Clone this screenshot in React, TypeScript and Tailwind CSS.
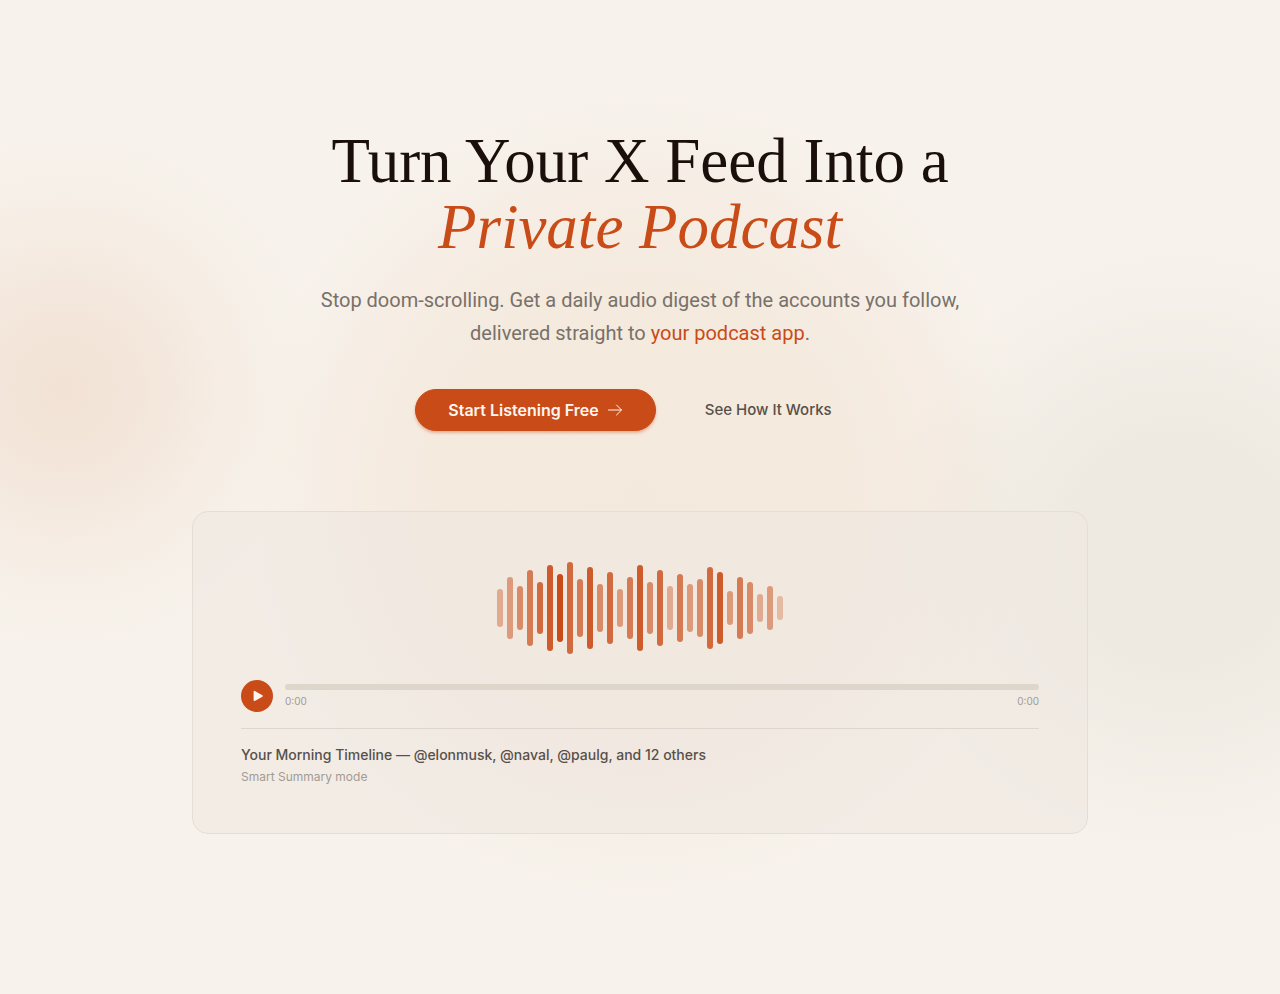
type Bar = { height: number; opacity: number };

const bars: Bar[] = [
  { height: 38, opacity: 0.4 },
  { height: 62, opacity: 0.5 },
  { height: 44, opacity: 0.6 },
  { height: 76, opacity: 0.7 },
  { height: 52, opacity: 0.8 },
  { height: 86, opacity: 0.9 },
  { height: 68, opacity: 1 },
  { height: 92, opacity: 0.8 },
  { height: 58, opacity: 0.7 },
  { height: 82, opacity: 0.9 },
  { height: 48, opacity: 0.6 },
  { height: 72, opacity: 0.8 },
  { height: 38, opacity: 0.5 },
  { height: 62, opacity: 0.7 },
  { height: 86, opacity: 0.9 },
  { height: 52, opacity: 0.6 },
  { height: 76, opacity: 0.8 },
  { height: 44, opacity: 0.4 },
  { height: 68, opacity: 0.7 },
  { height: 48, opacity: 0.5 },
  { height: 58, opacity: 0.6 },
  { height: 82, opacity: 0.8 },
  { height: 72, opacity: 0.9 },
  { height: 34, opacity: 0.5 },
  { height: 62, opacity: 0.7 },
  { height: 52, opacity: 0.6 },
  { height: 28, opacity: 0.4 },
  { height: 44, opacity: 0.5 },
  { height: 24, opacity: 0.3 },
];

function Glow() {
  return (
    <div aria-hidden="true" className="pointer-events-none absolute inset-0 -z-10 overflow-hidden">
      <div className="absolute top-[495px] left-1/2 size-[800px] -translate-1/2 rounded-full bg-[radial-gradient(closest-side,rgba(225,185,135,0.15)_0%,rgba(225,185,140,0.14)_50%,rgba(235,175,145,0.08)_75%,rgba(235,190,160,0.02)_92%,transparent_100%)]" />
      <div className="absolute top-[390px] left-[5%] size-[520px] -translate-1/2 rounded-full bg-[radial-gradient(closest-side,rgba(201,85,23,0.1)_0%,rgba(201,85,23,0.08)_30%,rgba(220,110,50,0.04)_60%,rgba(220,110,50,0.012)_82%,transparent_100%)]" />
      <div className="absolute top-[550px] left-[92%] size-[600px] -translate-1/2 rounded-full bg-[radial-gradient(closest-side,rgba(110,115,90,0.07)_0%,rgba(110,115,90,0.065)_35%,rgba(110,115,90,0.03)_70%,rgba(110,115,90,0.01)_88%,transparent_100%)]" />
    </div>
  );
}

function ArrowIcon() {
  return (
    <svg aria-hidden="true" width="16" height="16" viewBox="0 0 16 16" fill="none" stroke="currentColor" strokeLinecap="round" strokeLinejoin="round">
      <path d="M1.5 8h13M9.5 3l5 5-5 5" />
    </svg>
  );
}

function Hero() {
  return (
    <div className="flex flex-col items-center text-center">
      <h1 className="font-['Georgia','Liberation_Serif',serif] text-[63px] leading-[66px] text-[#1a0f0a]">
        Turn Your X Feed Into a
        <br />
        <em className="text-[#c94b17]">Private Podcast</em>
      </h1>
      <p className="mt-6 max-w-2xl font-['Roboto',sans-serif] text-[20px] leading-[33px] text-[#78716a]">
        Stop doom-scrolling. Get a daily audio digest of the accounts you follow, delivered straight to{" "}
        <a href="#apps" className="text-[#c94b17]">your podcast app</a>.
      </p>
      <div className="mt-[39px] flex items-center gap-4">
        <button type="button" className="flex h-[42px] items-center gap-2 rounded-full border border-[#c94b17] bg-[#c94b17] px-8 text-base font-semibold text-[#fdf6f0] shadow-[0_2px_3px_rgba(201,75,23,0.35)]">
          Start Listening Free
          <ArrowIcon />
        </button>
        <a href="#how" className="flex h-[42px] items-center border border-transparent px-8 text-[15px] font-medium text-[#57504a]">
          See How It Works
        </a>
      </div>
    </div>
  );
}

function Player() {
  return (
    <section aria-label="Sample episode" className="mt-20 w-full rounded-2xl border border-[#e5ded5] bg-[#efe8e1]/60 p-12">
      <div aria-hidden="true" className="flex h-24 items-center justify-center gap-1">
        {bars.map((bar, i) => (
          <span key={i} className="w-1.5 rounded-full bg-[#c94b17]" style={{ height: bar.height, opacity: bar.opacity }} />
        ))}
      </div>
      <div className="mt-6 flex items-center gap-3">
        <button type="button" aria-label="Play" className="flex size-8 shrink-0 items-center justify-center rounded-full bg-[#c94b17] text-[#fdf6f0]">
          <svg aria-hidden="true" width="12" height="12" viewBox="0 0 12 12" fill="currentColor" stroke="currentColor" strokeWidth="1.6" strokeLinejoin="round">
            <path d="M3.4 1.7v8.6L11 6z" />
          </svg>
        </button>
        <div className="flex grow flex-col gap-1">
          <div className="h-1.5 rounded-full bg-[#ddd6cb]" />
          <div className="flex justify-between text-[10px] leading-[14px] text-[#a39b93]">
            <span>0:00</span>
            <span>0:00</span>
          </div>
        </div>
      </div>
      <div className="mt-4 border-t border-[#ddd6cb] pt-4">
        <p className="text-sm leading-5 font-medium text-[#57504a]">
          Your Morning Timeline — @elonmusk, @naval, @paulg, and 12 others
        </p>
        <p className="mt-1 text-xs leading-4 text-[#a39b93]">Smart Summary mode</p>
      </div>
    </section>
  );
}

export default function App() {
  return (
    <main className="relative isolate min-h-screen bg-[#f7f2eb] px-6 pt-32 pb-40 font-['Inter',sans-serif]">
      <Glow />
      <div className="mx-auto max-w-4xl">
        <Hero />
        <Player />
      </div>
    </main>
  );
}
